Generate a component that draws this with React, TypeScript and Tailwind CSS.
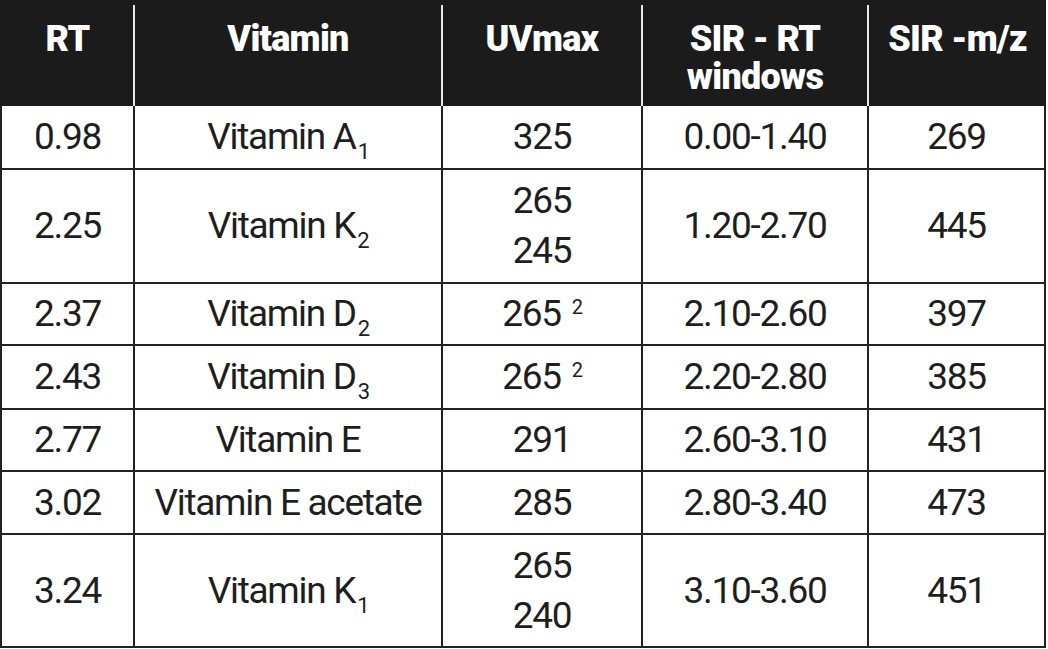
import React from "react";

type Cell = React.ReactNode;

const widths = ["w-[133px]", "w-[308px]", "w-[200px]", "w-[226px]", "w-[177px]"];

const Sub = ({ children }: { children: React.ReactNode }) => (
  <span className="relative top-[10px] ml-[2px] text-[22px] leading-none">{children}</span>
);

const Sup = ({ children }: { children: React.ReactNode }) => (
  <span className="relative -top-[12px] ml-[11px] text-[20px] leading-none">{children}</span>
);

const rows: { h: string; cells: Cell[] }[] = [
  { h: "h-[64px]", cells: ["0.98", <>Vitamin A<Sub>1</Sub></>, "325", "0.00-1.40", "269"] },
  {
    h: "h-[114px]",
    cells: ["2.25", <>Vitamin K<Sub>2</Sub></>, <>265<br />245</>, "1.20-2.70", "445"],
  },
  { h: "h-[62px]", cells: ["2.37", <>Vitamin D<Sub>2</Sub></>, <>265<Sup>2</Sup></>, "2.10-2.60", "397"] },
  { h: "h-[64px]", cells: ["2.43", <>Vitamin D<Sub>3</Sub></>, <>265<Sup>2</Sup></>, "2.20-2.80", "385"] },
  { h: "h-[62px]", cells: ["2.77", "Vitamin E", "291", "2.60-3.10", "431"] },
  { h: "h-[63px]", cells: ["3.02", "Vitamin E acetate", "285", "2.80-3.40", "473"] },
  {
    h: "h-[113px]",
    cells: ["3.24", <>Vitamin K<Sub>1</Sub></>, <>265<br />240</>, "3.10-3.60", "451"],
  },
];

const headers: Cell[] = ["RT", "Vitamin", "UVmax", <>SIR - RT<br />windows</>, "SIR -m/z"];

export default function App() {
  return (
    <div className="w-[1048px] h-[649px] bg-white overflow-hidden font-['Roboto',sans-serif]">
      <div className="w-[1046px]">
        <div className="flex h-[106px] bg-[#1b1b1b] pt-[5px] pl-[2px]">
          {headers.map((h, i) => (
            <div
              key={i}
              className={`${widths[i]} ${i < 4 ? "border-r-2 border-[#e8e8e8]" : ""} pt-[15px] text-center text-[36px] leading-[38px] font-black tracking-[-0.02em] text-white`}
            >
              {h}
            </div>
          ))}
        </div>
        <div className="border-l-2 border-[#222]">
          {rows.map((r, ri) => (
            <div key={ri} className={`flex ${r.h} border-b-2 border-[#222]`}>
              {r.cells.map((c, ci) => (
                <div
                  key={ci}
                  className={`${widths[ci]} flex items-center justify-center border-r-2 border-[#222] text-center text-[37px] leading-[50px] tracking-[-0.035em] text-[#1e1e1e]`}
                >
                  <span>{c}</span>
                </div>
              ))}
            </div>
          ))}
        </div>
      </div>
    </div>
  );
}
